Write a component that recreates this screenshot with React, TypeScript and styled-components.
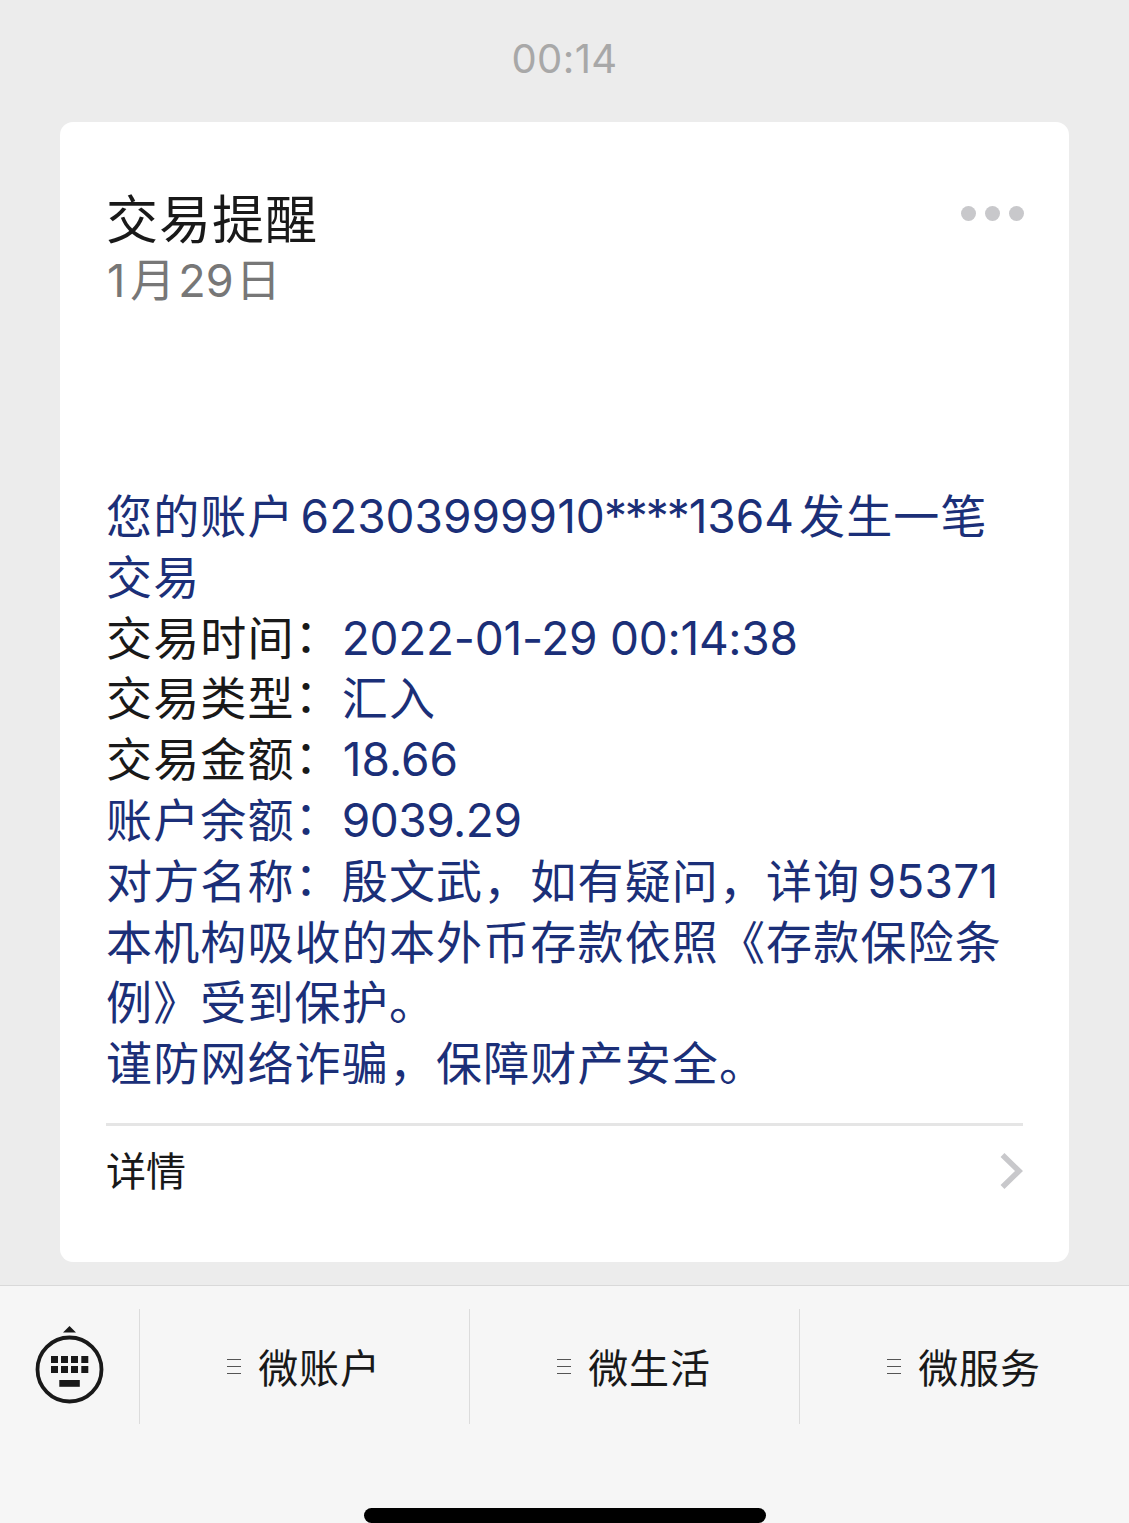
import React from "react";
import styled, { createGlobalStyle } from "styled-components";

const GlobalStyle = createGlobalStyle`
  * { box-sizing: border-box; }
  body {
    margin: 0;
    background: #ececec;
    font-family: "Noto Sans CJK SC", sans-serif;
    color: #191919;
  }
`;

const Screen = styled.div`
  display: flex;
  flex-direction: column;
  width: 1129px;
  height: 1523px;
  overflow: hidden;
  background: #ececec;
`;

const Timestamp = styled.time`
  height: 122px;
  padding: 35px 0 0 0;
  text-align: center;
  font: 400 40px/48px Inter, sans-serif;
  letter-spacing: 0.4px;
  color: #a8a8a8;
`;

const Card = styled.article`
  display: flex;
  flex-direction: column;
  margin: 0 60px;
  height: 1140px;
  padding: 63px 46px 0;
  border-radius: 13px;
  background: #fff;
`;

const CardHeader = styled.header`
  display: flex;
  justify-content: space-between;
  height: 298px;
`;

const Title = styled.h1`
  margin: 0;
  font-size: 52px;
  font-weight: 400;
  line-height: 64px;
  letter-spacing: 1px;
`;

const DateText = styled.div`
  font-size: 45px;
  line-height: 57px;
  color: #777;
`;

const Num = styled.span<{ $track?: number; $lead?: number; $trail?: number }>`
  font-family: Inter, sans-serif;
  line-height: 40px;
  letter-spacing: ${(p) => p.$track ?? 0}px;
  margin-left: ${(p) => p.$lead ?? 0}px;
  margin-right: ${(p) => p.$trail ?? 0}px;
`;

const Colon = styled.span`
  line-height: 40px;
  vertical-align: 3px;
`;

const MoreButton = styled.button`
  display: flex;
  gap: 8.7px;
  height: 15px;
  margin: 21px -0.5px 0 0;
  padding: 0;
  border: 0;
  background: none;
`;

const Dot = styled.span`
  width: 15px;
  height: 15px;
  border-radius: 50%;
  background: #c8c8cb;
`;

const Body = styled.div`
  height: 640px;
  font-size: 46px;
  line-height: 60.8px;
  letter-spacing: 1.15px;
  white-space: nowrap;
  color: #1b2f78;
`;

const Line = styled.div`
  height: 60.8px;
`;

const Label = styled.span`
  color: #191919;
`;

const Footer = styled.footer`
  display: flex;
  justify-content: space-between;
  width: 917px;
  height: 90px;
  padding-top: 15px;
  border-top: 3px solid #e5e5e5;
  font-size: 40px;
  line-height: 56px;
`;

const Chevron = styled.svg`
  width: 24px;
  height: 38px;
  margin-top: 11px;
`;

const Bar = styled.nav`
  display: flex;
  height: 139px;
  margin-top: 23px;
  padding-top: 23px;
  border-top: 1px solid #d9d9d9;
  background: #f6f6f6;
`;

const KeyboardButton = styled.button`
  display: flex;
  align-items: flex-start;
  width: 139px;
  height: 116px;
  padding: 16px 0 0 34px;
  border: 0;
  background: none;
`;

const MenuItem = styled.button`
  display: flex;
  flex: 1;
  align-items: center;
  justify-content: center;
  gap: 17px;
  height: 116px;
  padding: 0 1px 3px 0;
  border: 0;
  border-left: 1px solid #dcdcdc;
  background: none;
  font: 400 40px/56px "Noto Sans CJK SC", sans-serif;
  letter-spacing: 0.8px;
  color: #191919;
`;

const MenuLines = styled.span`
  display: flex;
  flex-direction: column;
  justify-content: space-between;
  width: 14px;
  height: 15px;
  margin-top: 2px;
`;

const MenuLine = styled.span`
  height: 1px;
  background: #555;
`;

const HomeArea = styled.div`
  display: flex;
  flex: 1;
  justify-content: center;
  align-items: flex-end;
  background: #f6f6f6;
`;

const HomeIndicator = styled.div`
  width: 402px;
  height: 15px;
  border-radius: 8px;
  background: #000;
`;

const KeyboardIcon = () => (
  <svg width="71" height="80" viewBox="0 0 71 80" fill="#191919">
    <path d="M35.5 1 L42 7.5 H29 Z" />
    <circle cx="35.5" cy="44.5" r="32" fill="none" stroke="#191919" strokeWidth="3.8" />
    {[31, 41].map((y) =>
      [17, 27, 37, 47.3].map((x) => <rect key={`${x}-${y}`} x={x} y={y} width="7" height="7" />)
    )}
    <rect x="25.3" y="55" width="20.5" height="6.8" />
  </svg>
);

const menus = ["微账户", "微生活", "微服务"];

export default function App() {
  return (
    <>
      <GlobalStyle />
      <Screen>
        <Timestamp>00:14</Timestamp>
        <Card>
          <CardHeader>
            <div>
              <Title>交易提醒</Title>
              <DateText>
                <Num $lead={1} $trail={5}>1</Num>月<Num $lead={3} $trail={2}>29</Num>日
              </DateText>
            </div>
            <MoreButton aria-label="更多">
              <Dot />
              <Dot />
              <Dot />
            </MoreButton>
          </CardHeader>
          <Body>
            <Line>
              您的账户<Num $lead={6}>62303999910</Num>
              <Num $lead={-1} $track={-2.1} $trail={1}>****</Num>
              <Num $trail={5}>1364</Num>发生一笔
            </Line>
            <Line>交易</Line>
            <Line>
              <Label>交易时间<Colon>：</Colon></Label>
              <Num $track={-0.27}>2022-01-29 00:14:38</Num>
            </Line>
            <Line>
              <Label>交易类型<Colon>：</Colon></Label>汇入
            </Line>
            <Line>
              <Label>交易金额<Colon>：</Colon></Label>
              <Num $lead={1}>18.66</Num>
            </Line>
            <Line>
              账户余额<Colon>：</Colon>
              <Num $track={-0.5}>9039.29</Num>
            </Line>
            <Line>
              对方名称<Colon>：</Colon>殷文武，如有疑问，详询<Num $lead={7} $track={0.3}>95371</Num>
            </Line>
            <Line>本机构吸收的本外币存款依照《存款保险条</Line>
            <Line>例》受到保护。</Line>
            <Line>谨防网络诈骗，保障财产安全。</Line>
          </Body>
          <Footer>
            <span>详情</span>
            <Chevron viewBox="0 0 24 38" fill="none" stroke="#c8c8cb" strokeWidth="5.6">
              <path d="M3.5 3 L20 19 L3.5 35" />
            </Chevron>
          </Footer>
        </Card>
        <Bar>
          <KeyboardButton aria-label="键盘">
            <KeyboardIcon />
          </KeyboardButton>
          {menus.map((name) => (
            <MenuItem key={name}>
              <MenuLines>
                <MenuLine />
                <MenuLine />
                <MenuLine />
              </MenuLines>
              {name}
            </MenuItem>
          ))}
        </Bar>
        <HomeArea>
          <HomeIndicator />
        </HomeArea>
      </Screen>
    </>
  );
}
